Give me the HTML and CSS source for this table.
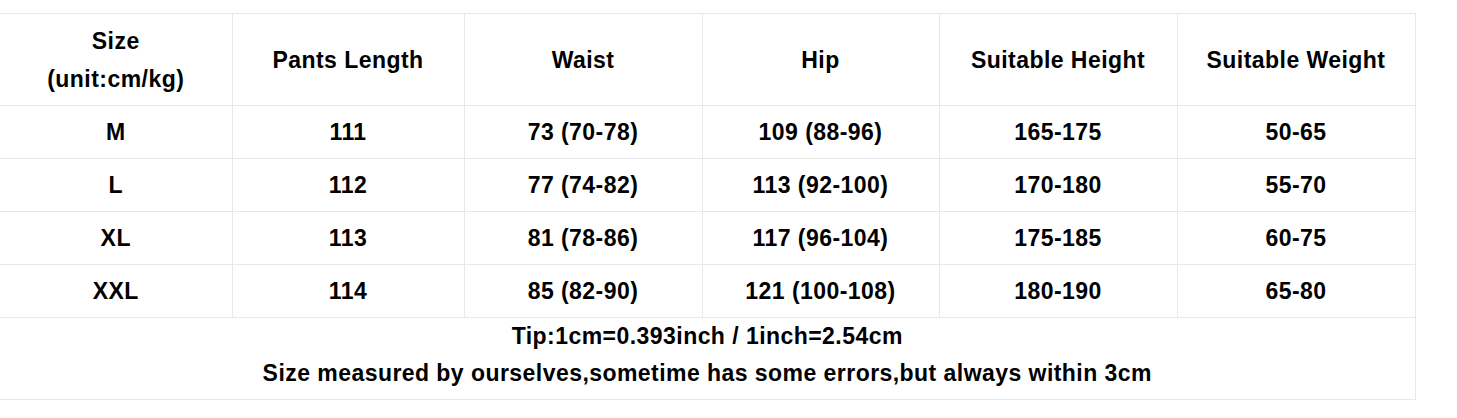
FILE: index.html
```html
<!DOCTYPE html>
<html>
<head>
<meta charset="utf-8">
<link rel="stylesheet" href="styles.css">
</head>
<body>
<table class="size-table">
  <colgroup>
    <col class="c1"><col class="c2"><col class="c3"><col class="c4"><col class="c5"><col class="c6">
  </colgroup>
  <tr class="head">
    <td>Size<br>(unit:cm/kg)</td>
    <td>Pants Length</td>
    <td>Waist</td>
    <td>Hip</td>
    <td>Suitable Height</td>
    <td>Suitable Weight</td>
  </tr>
  <tr class="row">
    <td>M</td><td>111</td><td>73 (70-78)</td><td>109 (88-96)</td><td>165-175</td><td>50-65</td>
  </tr>
  <tr class="row">
    <td>L</td><td>112</td><td>77 (74-82)</td><td>113 (92-100)</td><td>170-180</td><td>55-70</td>
  </tr>
  <tr class="row">
    <td>XL</td><td>113</td><td>81 (78-86)</td><td>117 (96-104)</td><td>175-185</td><td>60-75</td>
  </tr>
  <tr class="row">
    <td>XXL</td><td>114</td><td>85 (82-90)</td><td>121 (100-108)</td><td>180-190</td><td>65-80</td>
  </tr>
  <tr class="foot">
    <td colspan="6">
      <div class="tip">Tip:1cm=0.393inch / 1inch=2.54cm</div>
      <div class="note">Size measured by ourselves,sometime has some errors,but always within 3cm</div>
    </td>
  </tr>
</table>
</body>
</html>
```

FILE: styles.css
```css
html, body {
  margin: 0;
  padding: 0;
  background: #fff;
}
body {
  padding-top: 13px;
  font-family: "Liberation Sans", Arial, sans-serif;
  color: #000;
}
.size-table {
  border-collapse: collapse;
  table-layout: fixed;
  width: 1415px;
  font-size: 23px;
  font-weight: bold;
  letter-spacing: 0.45px;
}
.c1 { width: 232px; }
.c2 { width: 232px; }
.c3 { width: 238px; }
.c4 { width: 237px; }
.c5 { width: 238px; }
.c6 { width: 238px; }
.size-table td {
  border: 1px solid #e8e8e8;
  text-align: center;
  vertical-align: middle;
  padding: 0;
}
.size-table tr td:first-child {
  border-left: none;
}
.head td {
  height: 91px;
  line-height: 38px;
}
.row td {
  height: 52px;
  line-height: 38px;
}
.foot td {
  height: 81px;
  vertical-align: top;
}
.tip {
  line-height: 36px;
}
.note {
  line-height: 38px;
}
```
